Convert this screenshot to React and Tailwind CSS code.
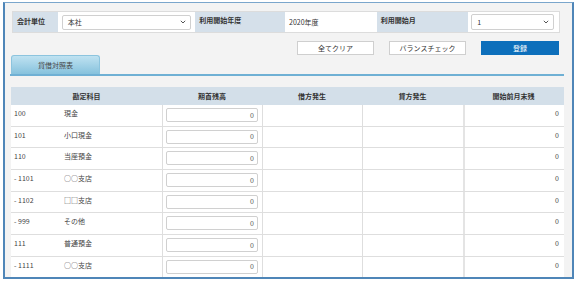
import React from "react";

const rows = [
  ["100", "現金"],
  ["101", "小口現金"],
  ["110", "当座預金"],
  ["- 1101", "○○支店"],
  ["- 1102", "□□支店"],
  ["- 999", "その他"],
  ["111", "普通預金"],
  ["- 1111", "○○支店"],
];

function Chevron() {
  return (
    <svg width="6" height="4" viewBox="0 0 6 4" className="text-[#555]">
      <path d="M0.8 0.8 L3 3 L5.2 0.8" fill="none" stroke="currentColor" strokeWidth="1" />
    </svg>
  );
}

export default function App() {
  return (
    <div
      className="w-[575px] h-[282px] bg-white pt-[2px] pl-[3px] overflow-hidden text-[7px] text-[#333]"
      style={{ fontFamily: '"Noto Sans CJK JP", "Noto Sans", sans-serif' }}
    >
      <div className="w-[571px] h-[277px] bg-[#f3f3f3] border-x-2 border-b-2 border-t border-[#4f86b8] border-t-[#7aa6cc] overflow-hidden flex flex-col">
        {/* header fields */}
        <div className="shrink-0 mt-[8px] ml-[7px] w-[548px] h-[22px] flex border border-[#dcdcdc] bg-white">
          <div className="w-[45px] bg-[#d5e0ea] font-bold pl-[4px] pt-[5px] leading-[9px]">会計単位</div>
          <div className="w-[138px] px-[4px] flex items-center">
            <div className="w-[129px] h-[15px] border border-[#d0d0d0] rounded-[2px] bg-white flex items-center justify-between pl-[5px] pr-[4px]">
              <span>本社</span>
              <Chevron />
            </div>
          </div>
          <div className="w-[90px] bg-[#d5e0ea] font-bold pl-[4px] pt-[4px] leading-[9px]">利用開始年度</div>
          <div className="w-[92px] pl-[4px] flex items-center">2020年度</div>
          <div className="w-[92px] bg-[#d5e0ea] font-bold pl-[4px] pt-[4px] leading-[9px]">利用開始月</div>
          <div className="w-[91px] pl-[3px] flex items-center">
            <div className="w-[83px] h-[16px] border border-[#d0d0d0] rounded-[2px] bg-white flex items-center justify-between pl-[5px] pr-[4px]">
              <span>1</span>
              <Chevron />
            </div>
          </div>
        </div>

        {/* buttons */}
        <div className="shrink-0 mt-[8px] flex justify-end gap-[15px] pr-[13px]">
          <button className="w-[77px] h-[14px] bg-white border border-[#cfcfcf] leading-none">全てクリア</button>
          <button className="w-[77px] h-[14px] bg-white border border-[#cfcfcf] leading-none">バランスチェック</button>
          <button className="w-[78px] h-[14px] bg-[#0d6fbb] text-white leading-none">登録</button>
        </div>

        {/* tab */}
        <div className="shrink-0 ml-[6px] w-[89px] h-[19px] rounded-t-[3px] border border-b-0 border-[#8cc4de] bg-gradient-to-b from-[#bfe2f1] to-[#86c2dd] flex items-center justify-center text-[#444]">
          貸借対照表
        </div>
        <div className="shrink-0 ml-[5px] w-[554px] h-[2px] bg-[#6fb0d4]" />

        {/* table */}
        <div className="shrink-0 mt-[11px] ml-[6px] w-[553px] flex flex-col">
          <div className="shrink-0 h-[18px] flex bg-[#d3dfe9] font-bold text-[#333]">
            <div className="w-[151px] flex items-center justify-center">勘定科目</div>
            <div className="w-[100px] flex items-center justify-center">期首残高</div>
            <div className="w-[100px] flex items-center justify-center">借方発生</div>
            <div className="w-[101px] flex items-center justify-center">貸方発生</div>
            <div className="w-[101px] flex items-center justify-center">開始前月末残</div>
          </div>
          {rows.map(([code, name]) => (
            <div key={code} className="h-[21.67px] shrink-0 flex bg-white border-b border-[#dedede]">
              <div className="w-[151px] flex pl-[3px] pt-[4px] leading-[9px] text-[#444]">
                <span className="w-[50px]">{code}</span>
                <span>{name}</span>
              </div>
              <div className="w-[100px] border-l border-[#dedede] pl-[3px] pr-[4px] pt-[3px]">
                <div className="h-[14px] border border-[#d0d0d0] rounded-[2px] bg-white flex items-center justify-end pr-[3px] text-[#555]">
                  0
                </div>
              </div>
              <div className="w-[100px] border-l border-[#dedede]" />
              <div className="w-[101px] border-l border-[#dedede]" />
              <div className="w-[101px] border-l-2 border-[#e4e4e4] flex justify-end pr-[5px] pt-[4px] leading-[9px] text-[#444]">
                0
              </div>
            </div>
          ))}
        </div>
      </div>
    </div>
  );
}
